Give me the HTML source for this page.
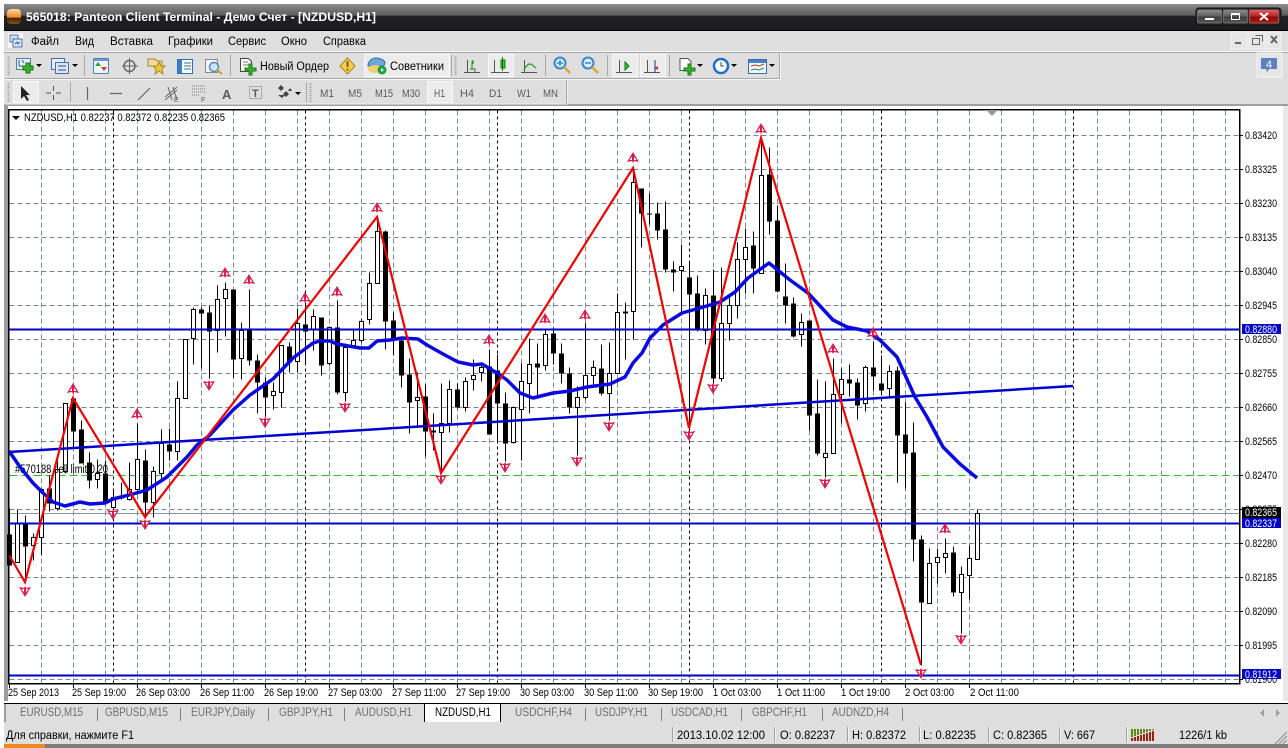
<!DOCTYPE html>
<html><head><meta charset="utf-8"><title>MT4</title>
<style>
html,body{margin:0;padding:0;background:#fff;width:1288px;height:748px;overflow:hidden}
svg{display:block;position:absolute;left:0;top:0}
text{font-family:"Liberation Sans",sans-serif;font-size:11.5px;fill:#000}
.g{fill:#5a5a5a}
.a text,text.a{font-size:11px}
.t text{fill:#707070;font-size:11.5px}
.w{fill:#fff;font-size:11px}
</style></head><body>
<svg width="1288" height="748" viewBox="0 0 1288 748" xmlns="http://www.w3.org/2000/svg">
<defs>
<linearGradient id="tb" x1="0" y1="0" x2="0" y2="1"><stop offset="0" stop-color="#8e8e8e"/><stop offset=".43" stop-color="#5a5a5a"/><stop offset=".44" stop-color="#232325"/><stop offset="1" stop-color="#1a1a1c"/></linearGradient>
<linearGradient id="btn" x1="0" y1="0" x2="0" y2="1"><stop offset="0" stop-color="#8a8a8a"/><stop offset=".5" stop-color="#5c5c5c"/><stop offset=".5" stop-color="#3c3c3c"/><stop offset="1" stop-color="#555"/></linearGradient>
<linearGradient id="cl" x1="0" y1="0" x2="0" y2="1"><stop offset="0" stop-color="#d86060"/><stop offset=".5" stop-color="#b82020"/><stop offset=".5" stop-color="#8e0c0c"/><stop offset="1" stop-color="#a81818"/></linearGradient>
<linearGradient id="or" x1="0" y1="0" x2="0" y2="1"><stop offset="0" stop-color="#ffd9a0"/><stop offset=".55" stop-color="#f08a20"/><stop offset=".6" stop-color="#3a2208"/><stop offset="1" stop-color="#8a5010"/></linearGradient>
</defs>
<rect width="1288" height="748" fill="#fff"/>
<!-- title bar -->
<rect x="4" y="4" width="1284" height="27" fill="url(#tb)"/>
<rect x="4" y="30" width="1284" height="1" fill="#000"/>
<rect x="7" y="9" width="14" height="15" rx="4" fill="url(#or)"/>
<text x="26" y="21" style="fill:#fff;font-weight:bold;font-size:12px" textLength="350" lengthAdjust="spacingAndGlyphs">565018: Panteon Client Terminal - Демо Счет - [NZDUSD,H1]</text>
<rect x="1196" y="8" width="85" height="17" rx="3" fill="#2a2a2c" stroke="#111"/>
<rect x="1197.5" y="10" width="24" height="13" rx="1.5" fill="url(#btn)" stroke="#999" stroke-opacity=".5"/>
<rect x="1223.5" y="10" width="24" height="13" rx="1.5" fill="url(#btn)" stroke="#999" stroke-opacity=".5"/>
<rect x="1249.5" y="10" width="29" height="13" rx="1.5" fill="url(#cl)" stroke="#d88" stroke-opacity=".5"/>
<rect x="1205" y="18" width="9" height="2" fill="#fff"/>
<rect x="1231.5" y="13.5" width="8" height="6" fill="none" stroke="#fff" stroke-width="1"/><rect x="1231" y="13" width="9" height="2" fill="#fff"/>
<path d="M1260 13l8 7M1268 13l-8 7" stroke="#fff" stroke-width="2" fill="none"/>
<!-- left frame + base -->
<rect x="4" y="31" width="1284" height="74" fill="#dfdfdf"/>
<rect x="4" y="51" width="1284" height="1" fill="#f8f8f8"/>
<rect x="4" y="52" width="1284" height="1" fill="#a8a8a8"/>
<rect x="4" y="104" width="1284" height="2" fill="#a0a09a"/>
<rect x="4" y="106" width="4" height="616" fill="#9c9c9c"/>
<rect x="1283" y="106" width="5" height="600" fill="#e8e8e8"/>
<!-- menu -->
<rect x="8" y="33" width="15" height="15" fill="#f4f6fb"/>
<rect x="10" y="35" width="8" height="7" fill="#cfe0f4" stroke="#5a7cb0"/><rect x="13" y="39" width="9" height="8" fill="#dce8f8" stroke="#4a6ca8"/><path d="M15 44l2-2 1 2 2-2" stroke="#3a5c98" fill="none"/>
<g>
<text x="31" y="45" textLength="28" lengthAdjust="spacingAndGlyphs">Файл</text>
<text x="75" y="45" textLength="19" lengthAdjust="spacingAndGlyphs">Вид</text>
<text x="110" y="45" textLength="43" lengthAdjust="spacingAndGlyphs">Вставка</text>
<text x="168" y="45" textLength="45" lengthAdjust="spacingAndGlyphs">Графики</text>
<text x="228" y="45" textLength="38" lengthAdjust="spacingAndGlyphs">Сервис</text>
<text x="281" y="45" textLength="26" lengthAdjust="spacingAndGlyphs">Окно</text>
<text x="323" y="45" textLength="43" lengthAdjust="spacingAndGlyphs">Справка</text>
</g>
<!-- mdi buttons -->
<path d="M1231 32h16v17h-16zM1249 32h16v17h-16zM1267 32h14v17h-14z" fill="#e6e6e6" stroke="#f4f4f4"/>
<rect x="1235" y="42" width="6" height="2" fill="#666"/>
<path d="M1255.5 35.5h7v6M1252.5 38.5h7v6h-7z" fill="none" stroke="#666"/>
<path d="M1271 36l6 7M1277 36l-6 7" stroke="#666" stroke-width="2" fill="none"/>
<!-- toolbar 1 -->
<path d="M5 78.5H779.5V53" fill="none" stroke="#a8a8a8"/><path d="M5 79.5H780.5V53" fill="none" stroke="#f8f8f8"/>
<path d="M8.5 56V76M455.5 56V76" stroke="#a0a0a0" stroke-dasharray="1 1" stroke-width="2"/>
<path d="M84.5 55V76M230.5 55V76M451.5 55V76M545.5 55V76M607.5 55V76M669.5 55V76" stroke="#a8a8a8"/>
<!-- new chart -->
<rect x="16.5" y="58.5" width="14" height="11" fill="#e4eefa" stroke="#5a7ca8"/><path d="M19 60v6M19 66h9M22 60l2 3" stroke="#405a80" fill="none"/>
<path d="M26 63h4v3h3v4h-3v3h-4v-3h-3v-4h3z" fill="#3ab030" stroke="#1c7a18"/>
<path d="M36 64h6l-3 3z" fill="#000"/>
<rect x="51.5" y="58.5" width="13" height="11" fill="#e4eefa" stroke="#4a6ca8"/><rect x="55.5" y="62.5" width="13" height="11" fill="#dce8f8" stroke="#4a6ca8"/><path d="M58 66h8M58 70h8" stroke="#446"/>
<path d="M72 64h6l-3 3z" fill="#000"/>
<rect x="93.5" y="58.5" width="15" height="15" rx="1" fill="#f0f5fc" stroke="#4a80c0"/><rect x="94" y="59" width="14" height="2" fill="#6a9ad8"/><path d="M98 62l3 4h-6z" fill="#30a030"/><path d="M104 71l3-4h-6z" fill="#d04020"/>
<circle cx="129.5" cy="66" r="5.5" fill="none" stroke="#666" stroke-width="1.5"/><path d="M129.5 58v16M122 66h16" stroke="#666"/>
<path d="M148 59h7l2 2h5v5h-14z" fill="#f0dc98" stroke="#a08840"/><path d="M159 62l2 4 4 0-3 3 1 5-4-3-4 3 1-5-3-3 4 0z" fill="#f0c838" stroke="#a88820"/>
<rect x="177.5" y="59.5" width="15" height="14" fill="#fff" stroke="#3070b8"/><rect x="178" y="60" width="4" height="13" fill="#3a80c8"/><path d="M184 63h7M184 66h7M184 69h7" stroke="#406890"/>
<rect x="205.5" y="59.5" width="12" height="13" fill="#eef2f8" stroke="#8a8a8a"/><circle cx="214" cy="67" r="4.5" fill="#cfe4f8" stroke="#5a88b8" stroke-width="1.5"/><path d="M217 70l5 4" stroke="#d0a030" stroke-width="2"/>
<!-- order -->
<path d="M240.5 58.5h8l3 3v10h-11z" fill="#fff" stroke="#444"/><path d="M243 62h5M243 65h6" stroke="#777"/>
<path d="M249 64h3v4h4v3h-4v4h-3v-4h-4v-3h4z" fill="#3ab030" stroke="#1c7a18"/>
<text x="260" y="70" textLength="69" lengthAdjust="spacingAndGlyphs">Новый Ордер</text>
<path d="M347.5 58l7.5 8-7.5 8-7.5-8z" fill="#f4cf50" stroke="#a88818"/><rect x="346.5" y="61" width="2" height="6" fill="#806000"/><rect x="346.5" y="68.5" width="2" height="2" fill="#806000"/>
<rect x="364.5" y="54.5" width="85" height="22" fill="#ececec" stroke="#f8f8f8"/>
<path d="M368 66c0-5 4-8 8-8s9 2 9 5-3 3-8 3-5 0-9 0z" fill="#6ea8d8" stroke="#3a70a8"/><ellipse cx="375" cy="69" rx="7" ry="4" fill="#f0d070"/><circle cx="382" cy="70" r="4.5" fill="#20a040"/><path d="M381 68v4l3-2z" fill="#fff"/>
<text x="390" y="70" textLength="54" lengthAdjust="spacingAndGlyphs">Советники</text>
<!-- charts -->
<rect x="488.5" y="54.5" width="25" height="22" fill="#ececec" stroke="#f8f8f8"/>
<rect x="612.5" y="54.5" width="25" height="22" fill="#ececec" stroke="#f8f8f8"/>
<rect x="640.5" y="54.5" width="25" height="22" fill="#ececec" stroke="#f8f8f8"/>
<path d="M467.5 60v13M464 72.5h16M494.5 60v13M491 72.5h18M524.5 60v13M521 72.5h16M619.5 60v13M616 72.5h16M647.5 60v13M644 72.5h16" stroke="#555" fill="none"/>
<path d="M473 60v4M472 61v8h3v3M472 69h-2" stroke="#1c8a1c" fill="none"/>
<rect x="501" y="60" width="4" height="8" fill="#40c040" stroke="#0a7a0a"/><path d="M502.5 57v14" stroke="#0a7a0a"/>
<path d="M524 70c2-4 4-6 6-6s3 2 6 4" stroke="#2a9a2a" fill="none" stroke-width="1.3"/>
<path d="M625 62l4 4-4 4z" fill="#40c040" stroke="#0a7a0a"/>
<path d="M658 66l-4 2 4 2z" fill="#d04020"/><path d="M655 60v13" stroke="#0a3a8a"/>
<!-- zoom -->
<circle cx="560" cy="63" r="5.5" fill="#d8ecfb" stroke="#3a86c8" stroke-width="2"/><path d="M557 63h6M560 60v6" stroke="#3a86c8" stroke-width="1.5"/><path d="M564 67l6 6" stroke="#d4a838" stroke-width="2.5"/>
<circle cx="588" cy="63" r="5.5" fill="#d8ecfb" stroke="#3a86c8" stroke-width="2"/><path d="M585 63h6" stroke="#3a86c8" stroke-width="1.5"/><path d="M592 67l6 6" stroke="#d4a838" stroke-width="2.5"/>
<!-- templates/clock -->
<path d="M680 58.5h8l3 3v9h-11z" fill="#fff" stroke="#555"/><path d="M688 64h3v4h4v3h-4v4h-3v-4h-4v-3h4z" fill="#3ab030" stroke="#1c7a18"/>
<path d="M697 64h6l-3 3z" fill="#000"/>
<circle cx="721" cy="66" r="7" fill="#fff" stroke="#1c70c8" stroke-width="2.5"/><path d="M721 62v4h3" stroke="#444" fill="none"/>
<path d="M731 64h6l-3 3z" fill="#000"/>
<rect x="748.5" y="59.5" width="18" height="14" fill="#f4f6fa" stroke="#3a6cb0"/><rect x="749" y="60" width="17" height="3" fill="#4a80c8"/><path d="M751 66l4-1 4 1 5-2" stroke="#b04020" fill="none"/><path d="M751 70l4-1 4 1 5-2" stroke="#309030" fill="none"/>
<path d="M769 64h6l-3 3z" fill="#000"/>
<!-- notification -->
<rect x="1257" y="53" width="25" height="24" fill="#e6e6e6" stroke="#f6f6f6"/>
<path d="M1261 58h16v11h-8l-2 3-1-3h-5z" fill="#5e80bc"/>
<text x="1266" y="68" style="fill:#fff;font-size:11px">4</text>
<!-- toolbar 2 -->
<path d="M5 104H567.5V80" fill="none" stroke="#f0f0f0"/><path d="M566.5 80V104" stroke="#a8a8a8"/>
<path d="M8.5 83V102M310.5 83V102" stroke="#a0a0a0" stroke-dasharray="1 1" stroke-width="2"/>
<path d="M70.5 82V102M306.5 82V102" stroke="#a8a8a8"/>
<rect x="13.5" y="81.5" width="25" height="21" fill="#ececec" stroke="#f8f8f8"/>
<rect x="427.5" y="81.5" width="25" height="21" fill="#ececec" stroke="#f8f8f8"/>
<path d="M21 86v13l3-3 3 5 2-1-3-5h4z" fill="#222"/>
<path d="M53.5 86v5M53.5 95v5M46 93h5M56 93h5" stroke="#555" fill="none"/>
<path d="M87.5 87v13M110 93.5h12M138 100l12-12" stroke="#666" fill="none" stroke-width="1.2"/>
<path d="M165 97l12-10M165 100l12-10M168 87l4 13M173 87l4 13" stroke="#666" fill="none"/>
<text x="174" y="102" class="g" style="font-size:7px">E</text>
<path d="M192 86h14M192 89h14M192 92h14M192 95h8" stroke="#777" stroke-dasharray="1 1"/>
<text x="201" y="102" class="g" style="font-size:7px">F</text>
<text x="222" y="99" class="g" style="font-weight:bold;font-size:13px">A</text>
<rect x="249.5" y="86.5" width="12" height="12" fill="none" stroke="#777" stroke-dasharray="1 1"/>
<text x="252" y="97" class="g" style="font-weight:bold;font-size:11px">T</text>
<path d="M281 85l3 3-3 3-3-3zM286 91l3 3-3 3-3-3z" fill="#444"/><path d="M278 95h7l-3 3zM290 88l2 3h-4z" fill="#444"/>
<path d="M295 92h6l-3 3z" fill="#000"/>
<g>
<text x="320" y="97" class="g" style="font-size:11px" textLength="14" lengthAdjust="spacingAndGlyphs">M1</text>
<text x="348" y="97" class="g" style="font-size:11px" textLength="14" lengthAdjust="spacingAndGlyphs">M5</text>
<text x="375" y="97" class="g" style="font-size:11px" textLength="18" lengthAdjust="spacingAndGlyphs">M15</text>
<text x="402" y="97" class="g" style="font-size:11px" textLength="18" lengthAdjust="spacingAndGlyphs">M30</text>
<text x="434" y="97" class="g" style="font-size:11px" textLength="11" lengthAdjust="spacingAndGlyphs">H1</text>
<text x="460" y="97" class="g" style="font-size:11px" textLength="14" lengthAdjust="spacingAndGlyphs">H4</text>
<text x="489" y="97" class="g" style="font-size:11px" textLength="13" lengthAdjust="spacingAndGlyphs">D1</text>
<text x="517" y="97" class="g" style="font-size:11px" textLength="14" lengthAdjust="spacingAndGlyphs">W1</text>
<text x="543" y="97" class="g" style="font-size:11px" textLength="15" lengthAdjust="spacingAndGlyphs">MN</text>
</g>

<!-- chart -->
<rect x="8" y="106" width="1275" height="595" fill="#fff"/>
<g shape-rendering="crispEdges" fill="none" transform="translate(.5 .5)">
<path stroke="#778899" stroke-dasharray="5 3" d="M9 135H1239M9 169H1239M9 203H1239M9 237H1239M9 271H1239M9 305H1239M9 339H1239M9 373H1239M9 407H1239M9 441H1239M9 509H1239M9 543H1239M9 577H1239M9 611H1239M9 645H1239M9 679H1239"/>
<path stroke="#778899" stroke-dasharray="5 3" d="M41 110V683M73 110V683M105 110V683M137 110V683M169 110V683M201 110V683M233 110V683M265 110V683M297 110V683M329 110V683M361 110V683M393 110V683M425 110V683M457 110V683M489 110V683M521 110V683M553 110V683M585 110V683M617 110V683M649 110V683M681 110V683M713 110V683M745 110V683M777 110V683M809 110V683M841 110V683M873 110V683M905 110V683M937 110V683M969 110V683M1001 110V683M1033 110V683M1065 110V683M1097 110V683M1129 110V683M1161 110V683M1193 110V683M1225 110V683"/>
<path stroke="#000" stroke-dasharray="3 3" d="M113 110V683M305 110V683M497 110V683M689 110V683M881 110V683M1073 110V683"/>
<path stroke="#32b432" stroke-dasharray="8 4" d="M9 475H1239"/>
<path stroke="#8a949c" d="M9 513H1239"/>
<!-- wicks -->
<path stroke="#000" d="M9 508V565M17 509V562M25 515V582M33 533V560M41 488V555M49 475V511M57 457V510M65 403V473M73 398V447M81 420V463M89 452V488M97 459V488M105 460V503M113 488V508M121 482V499M129 462V500M137 423V490M145 449V518M153 466V517M161 429V478M169 428V460M177 381V460M185 339V398M193 307V364M201 307V368M209 305V378M217 285V352M225 282V336M233 289V377M241 322V379M249 289V365M257 354V413M265 377V416M273 382V409M281 345V407M289 342V372M297 308V372M305 303V363M313 309V350M321 317V375M329 326V365M337 300V394M345 343V401M353 330V348M361 318V342M369 272V324M377 218V283M385 230V349M393 312V355M401 336V387M409 358V433M417 372V426M425 384V456M433 413V450M441 383V472M449 380V432M457 383V408M465 377V411M473 359V390M481 363V381M489 349V434M497 354V443M505 392V461M513 406V443M521 363V460M529 338V413M537 343V395M545 330V370M553 327V364M561 343V383M569 367V413M577 386V455M585 323V399M593 360V385M601 344V395M609 342V420M617 293V373M625 302V359M633 168V339M641 188V247M649 193V224M657 202V239M665 201V272M673 261V291M681 244V313M689 263V428M697 275V331M705 288V344M713 269V383M721 267V381M729 297V340M737 242V318M745 228V293M753 231V293M761 140V273M769 147V234M777 205V292M785 263V323M793 297V337M801 313V346M809 320V430M817 379V455M825 381V477M833 358V453M841 368V423M849 364V396M857 378V419M865 365V411M873 341V390M881 355V394M889 365V396M897 366V482M905 402V488M913 422V561M921 535V665M929 548V603M937 548V583M945 538V573M953 546V596M961 566V633M969 545V599M977 509V559"/>
<!-- white bodies -->
<path stroke="#000" fill="#fff" d="M15 523H19V562H15ZM31 537H35V545H31ZM39 489H43V537H39ZM55 469H59V508H55ZM63 403H67V471H63ZM95 473H99V479H95ZM111 497H115V507H111ZM127 489H131V499H127ZM135 459H139V489H135ZM151 471H155V502H151ZM159 443H163V473H159ZM175 398H179V451H175ZM183 339H187V398H183ZM191 309H195V338H191ZM215 299H219V330H215ZM223 289H227V298H223ZM239 330H243V358H239ZM271 391H275V395H271ZM279 345H283V392H279ZM295 323H299V361H295ZM311 316H315V329H311ZM327 327H331V363H327ZM343 347H347V392H343ZM351 340H355V345H351ZM359 321H363V340H359ZM367 283H371V319H367ZM375 231H379V283H375ZM415 397H419V400H415ZM439 423H443V432H439ZM447 389H451V423H447ZM463 381H467V407H463ZM471 375H475V379H471ZM479 367H483V372H479ZM511 407H515V442H511ZM519 381H523V409H519ZM527 364H531V383H527ZM543 334H547V365H543ZM575 397H579V407H575ZM583 375H587V397H583ZM591 367H595V375H591ZM607 373H611V393H607ZM615 312H619V373H615ZM631 182H635V311H631ZM679 266H683V270H679ZM703 295H707V330H703ZM719 323H723V378H719ZM727 305H731V323H727ZM735 259H739V305H735ZM743 247H747V259H743ZM759 175H763V273H759ZM799 322H803V334H799ZM823 453H827V457H823ZM831 394H835V453H831ZM839 379H843V394H839ZM863 367H867V403H863ZM887 371H891V388H887ZM927 563H931V603H927ZM935 557H939V562H935ZM943 553H947V557H943ZM959 574H963V592H959ZM967 558H971V575H967ZM975 513H979V559H975Z"/>
<!-- black bodies -->
<path stroke="#000" stroke-width="5" d="M9 534V565M25 523V546M49 488V503M73 398V431M81 429V463M89 462V480M105 473V503M121 496V498M145 460V502M169 444V451M201 309V313M209 312V331M233 289V359M249 330V360M257 360V382M265 382V397M289 346V362M305 324V331M321 317V365M337 327V392M385 231V321M393 320V340M401 340V375M409 374V402M425 396V431M433 430V432M457 389V407M489 366V434M497 370V403M505 403V443M537 363V367M553 333V353M561 353V373M569 373V407M601 368V393M625 311V313M641 188V213M649 213V214M657 213V230M665 229V269M673 269V272M689 277V294M697 293V329M713 295V378M753 245V268M769 174V221M777 220V291M785 296V305M793 303V336M809 320V415M817 413V453M849 379V383M857 382V405M873 367V376M881 383V390M897 370V435M905 434V453M913 452V539M921 539V602M953 552V592"/>
</g>
<!-- order text -->
<text x="15" y="473" style="font-size:11.5px" textLength="93" lengthAdjust="spacingAndGlyphs">#570188 sell limit 0.20</text>
<!-- trend + levels -->
<path d="M9 452L1073 386" stroke="#0000d0" stroke-width="2.5" fill="none"/>
<path d="M9 329.5H1239M9 523.5H1239M9 675.5H1239" stroke="#0000c8" stroke-width="2" fill="none" shape-rendering="crispEdges"/>
<!-- MA -->
<polyline fill="none" stroke="#0a0ae0" stroke-width="3.5" stroke-linejoin="round" points="9,451 20,467 33,483 42,492 53,502 65,506 80,502 90,504 105,503 113,499 133,494 147,490 167,477 187,457 197,445 210,435 233,410 250,395 273,379 293,358 313,343 320,341 330,341 337,344 360,348 369,348 377,341 390,340 402,338 418,339 427,345 443,354 458,362 473,365 482,364 497,373 507,380 520,393 533,398 553,393 570,391 587,387 610,384 625,377 633,363 642,353 650,338 663,325 682,313 700,308 720,302 735,292 748,278 769,263 790,280 808,293 833,320 847,327 867,331 880,340 897,357 915,397 927,417 943,447 960,464 977,478"/>
<!-- zigzag -->
<polyline fill="none" stroke="#f00000" stroke-width="2.2" points="9,555 25,582 73,398 145,517 377,217 441,473 633,168 689,428 761,138 921,665"/>
<!-- arrows -->
<path fill="#dc1c4c" d="M73 383l-6 10 5-1 1 2 1-2 5 1zM137 408l-6 10 5-1 1 2 1-2 5 1zM225 267l-6 10 5-1 1 2 1-2 5 1zM249 274l-6 10 5-1 1 2 1-2 5 1zM305 292l-6 10 5-1 1 2 1-2 5 1zM377 202l-6 10 5-1 1 2 1-2 5 1zM337 286l-6 10 5-1 1 2 1-2 5 1zM489 334l-6 10 5-1 1 2 1-2 5 1zM545 313l-6 10 5-1 1 2 1-2 5 1zM585 309l-6 10 5-1 1 2 1-2 5 1zM633 152l-6 10 5-1 1 2 1-2 5 1zM761 123l-6 10 5-1 1 2 1-2 5 1zM833 343l-6 10 5-1 1 2 1-2 5 1zM873 327l-6 10 5-1 1 2 1-2 5 1zM945 523l-6 10 5-1 1 2 1-2 5 1zM25 597l-6-10 5 1 1-2 1 2 5-1zM113 520l-6-10 5 1 1-2 1 2 5-1zM209 391l-6-10 5 1 1-2 1 2 5-1zM265 428l-6-10 5 1 1-2 1 2 5-1zM145 530l-6-10 5 1 1-2 1 2 5-1zM345 413l-6-10 5 1 1-2 1 2 5-1zM441 485l-6-10 5 1 1-2 1 2 5-1zM505 473l-6-10 5 1 1-2 1 2 5-1zM577 467l-6-10 5 1 1-2 1 2 5-1zM609 432l-6-10 5 1 1-2 1 2 5-1zM713 394l-6-10 5 1 1-2 1 2 5-1zM689 441l-6-10 5 1 1-2 1 2 5-1zM825 489l-6-10 5 1 1-2 1 2 5-1zM961 645l-6-10 5 1 1-2 1 2 5-1zM921 679l-6-10 5 1 1-2 1 2 5-1z"/>
<path fill="#fff" d="M73 383m-1 4.500l-2.500 3.500h2.500zm2 0l2.500 3.500h-2.500zM137 408m-1 4.500l-2.500 3.500h2.500zm2 0l2.500 3.500h-2.500zM225 267m-1 4.500l-2.500 3.500h2.500zm2 0l2.500 3.500h-2.500zM249 274m-1 4.500l-2.500 3.500h2.500zm2 0l2.500 3.500h-2.500zM305 292m-1 4.500l-2.500 3.500h2.500zm2 0l2.500 3.500h-2.500zM377 202m-1 4.500l-2.500 3.500h2.500zm2 0l2.500 3.500h-2.500zM337 286m-1 4.500l-2.500 3.500h2.500zm2 0l2.500 3.500h-2.500zM489 334m-1 4.500l-2.500 3.500h2.500zm2 0l2.500 3.500h-2.500zM545 313m-1 4.500l-2.500 3.500h2.500zm2 0l2.500 3.500h-2.500zM585 309m-1 4.500l-2.500 3.500h2.500zm2 0l2.500 3.500h-2.500zM633 152m-1 4.500l-2.500 3.500h2.500zm2 0l2.500 3.500h-2.500zM761 123m-1 4.500l-2.500 3.500h2.500zm2 0l2.500 3.500h-2.500zM833 343m-1 4.500l-2.500 3.500h2.500zm2 0l2.500 3.500h-2.500zM873 327m-1 4.500l-2.500 3.500h2.500zm2 0l2.500 3.500h-2.500zM945 523m-1 4.500l-2.500 3.500h2.500zm2 0l2.500 3.500h-2.500zM25 597m-1-4.500l-2.500-3.500h2.500zm2 0l2.500-3.500h-2.500zM113 520m-1-4.500l-2.500-3.500h2.500zm2 0l2.500-3.500h-2.500zM209 391m-1-4.500l-2.500-3.500h2.500zm2 0l2.500-3.500h-2.500zM265 428m-1-4.500l-2.500-3.500h2.500zm2 0l2.500-3.500h-2.500zM145 530m-1-4.500l-2.500-3.500h2.500zm2 0l2.500-3.500h-2.500zM345 413m-1-4.500l-2.500-3.500h2.500zm2 0l2.500-3.500h-2.500zM441 485m-1-4.500l-2.500-3.500h2.500zm2 0l2.500-3.500h-2.500zM505 473m-1-4.500l-2.500-3.500h2.500zm2 0l2.500-3.500h-2.500zM577 467m-1-4.500l-2.500-3.500h2.500zm2 0l2.500-3.500h-2.500zM609 432m-1-4.500l-2.500-3.500h2.500zm2 0l2.500-3.500h-2.500zM713 394m-1-4.500l-2.500-3.500h2.500zm2 0l2.500-3.500h-2.500zM689 441m-1-4.500l-2.500-3.500h2.500zm2 0l2.500-3.500h-2.500zM825 489m-1-4.500l-2.500-3.500h2.500zm2 0l2.500-3.500h-2.500zM961 645m-1-4.500l-2.500-3.500h2.500zm2 0l2.500-3.500h-2.500zM921 679m-1-4.500l-2.500-3.500h2.500zm2 0l2.500-3.500h-2.500z"/>
<!-- frame -->
<rect x="1240" y="110" width="43" height="591" fill="#fff"/>
<path d="M8.5 109.5H1239.5V683.5H8.5Z" fill="none" stroke="#000" stroke-width="1.5" shape-rendering="crispEdges"/>
<path d="M986 110h12l-6 6z" fill="#9a9a9a"/>
<path d="M12 116h8l-4 4z" fill="#000"/>
<text x="24" y="121" style="font-size:11px" textLength="201" lengthAdjust="spacingAndGlyphs">NZDUSD,H1  0.82237 0.82372 0.82235 0.82365</text>
<!-- right axis -->
<path stroke="#000" d="M1239 135.5h4M1239 169.5h4M1239 203.5h4M1239 237.5h4M1239 271.5h4M1239 305.5h4M1239 339.5h4M1239 373.5h4M1239 407.5h4M1239 441.5h4M1239 475.5h4M1239 509.5h4M1239 543.5h4M1239 577.5h4M1239 611.5h4M1239 645.5h4M1239 679.5h4"/>
<g class="a">
<text x="1245" y="139" textLength="32" lengthAdjust="spacingAndGlyphs">0.83420</text>
<text x="1245" y="173" textLength="32" lengthAdjust="spacingAndGlyphs">0.83325</text>
<text x="1245" y="207" textLength="32" lengthAdjust="spacingAndGlyphs">0.83230</text>
<text x="1245" y="241" textLength="32" lengthAdjust="spacingAndGlyphs">0.83135</text>
<text x="1245" y="275" textLength="32" lengthAdjust="spacingAndGlyphs">0.83040</text>
<text x="1245" y="309" textLength="32" lengthAdjust="spacingAndGlyphs">0.82945</text>
<text x="1245" y="343" textLength="32" lengthAdjust="spacingAndGlyphs">0.82850</text>
<text x="1245" y="377" textLength="32" lengthAdjust="spacingAndGlyphs">0.82755</text>
<text x="1245" y="411" textLength="32" lengthAdjust="spacingAndGlyphs">0.82660</text>
<text x="1245" y="445" textLength="32" lengthAdjust="spacingAndGlyphs">0.82565</text>
<text x="1245" y="479" textLength="32" lengthAdjust="spacingAndGlyphs">0.82470</text>
<text x="1245" y="513" textLength="32" lengthAdjust="spacingAndGlyphs">0.82375</text>
<text x="1245" y="547" textLength="32" lengthAdjust="spacingAndGlyphs">0.82280</text>
<text x="1245" y="581" textLength="32" lengthAdjust="spacingAndGlyphs">0.82185</text>
<text x="1245" y="615" textLength="32" lengthAdjust="spacingAndGlyphs">0.82090</text>
<text x="1245" y="649" textLength="32" lengthAdjust="spacingAndGlyphs">0.81995</text>
<text x="1245" y="683" textLength="32" lengthAdjust="spacingAndGlyphs">0.81900</text>
</g>
<rect x="1242" y="324" width="39" height="10" fill="#0000c8"/>
<rect x="1242" y="507" width="39" height="11" fill="#000"/>
<rect x="1242" y="518" width="39" height="10" fill="#0000c8"/>
<rect x="1242" y="669" width="39" height="10" fill="#0000c8"/>
<text x="1245" y="333" class="w" style="fill:#fff" textLength="32" lengthAdjust="spacingAndGlyphs">0.82880</text>
<text x="1245" y="516" class="w" style="fill:#fff" textLength="32" lengthAdjust="spacingAndGlyphs">0.82365</text>
<text x="1245" y="527" class="w" style="fill:#fff" textLength="32" lengthAdjust="spacingAndGlyphs">0.82337</text>
<text x="1245" y="678" class="w" style="fill:#fff" textLength="32" lengthAdjust="spacingAndGlyphs">0.81912</text>
<!-- date axis -->
<path stroke="#000" d="M9.5 684v4M73.5 684v4M137.5 684v4M201.5 684v4M265.5 684v4M329.5 684v4M393.5 684v4M457.5 684v4M521.5 684v4M585.5 684v4M649.5 684v4M713.5 684v4M777.5 684v4M841.5 684v4M905.5 684v4M969.5 684v4"/>
<g class="a">
<text x="8" y="696" textLength="51" lengthAdjust="spacingAndGlyphs">25 Sep 2013</text>
<text x="72" y="696" textLength="54" lengthAdjust="spacingAndGlyphs">25 Sep 19:00</text>
<text x="136" y="696" textLength="54" lengthAdjust="spacingAndGlyphs">26 Sep 03:00</text>
<text x="200" y="696" textLength="54" lengthAdjust="spacingAndGlyphs">26 Sep 11:00</text>
<text x="264" y="696" textLength="54" lengthAdjust="spacingAndGlyphs">26 Sep 19:00</text>
<text x="328" y="696" textLength="54" lengthAdjust="spacingAndGlyphs">27 Sep 03:00</text>
<text x="392" y="696" textLength="54" lengthAdjust="spacingAndGlyphs">27 Sep 11:00</text>
<text x="456" y="696" textLength="54" lengthAdjust="spacingAndGlyphs">27 Sep 19:00</text>
<text x="520" y="696" textLength="54" lengthAdjust="spacingAndGlyphs">30 Sep 03:00</text>
<text x="584" y="696" textLength="54" lengthAdjust="spacingAndGlyphs">30 Sep 11:00</text>
<text x="648" y="696" textLength="55" lengthAdjust="spacingAndGlyphs">30 Sep 19:00</text>
<text x="713" y="696" textLength="48" lengthAdjust="spacingAndGlyphs">1 Oct 03:00</text>
<text x="777" y="696" textLength="48" lengthAdjust="spacingAndGlyphs">1 Oct 11:00</text>
<text x="841" y="696" textLength="49" lengthAdjust="spacingAndGlyphs">1 Oct 19:00</text>
<text x="905" y="696" textLength="49" lengthAdjust="spacingAndGlyphs">2 Oct 03:00</text>
<text x="970" y="696" textLength="49" lengthAdjust="spacingAndGlyphs">2 Oct 11:00</text>
</g>
<!-- tabs -->
<rect x="0" y="701" width="1288" height="2" fill="#fff"/>
<rect x="4" y="703" width="1284" height="19" fill="#dfdfdf"/>
<rect x="4" y="703" width="1284" height="1" fill="#000"/>
<rect x="4" y="704" width="2" height="18" fill="#9c9c9c"/>
<path d="M424.5 722V703.5H500.5V722" fill="#fff" stroke="#000"/>
<rect x="425" y="720" width="75" height="2" fill="#fff"/>
<path stroke="#808080" d="M97.5 708v13M180.5 708v13M268.5 708v13M344.5 708v13M585.5 708v13M661.5 708v13M741.5 708v13M822.5 708v13M902.5 708v13"/>
<g class="t">
<text x="20" y="716" textLength="63" lengthAdjust="spacingAndGlyphs">EURUSD,M15</text>
<text x="105" y="716" textLength="63" lengthAdjust="spacingAndGlyphs">GBPUSD,M15</text>
<text x="191" y="716" textLength="64" lengthAdjust="spacingAndGlyphs">EURJPY,Daily</text>
<text x="279" y="716" textLength="54" lengthAdjust="spacingAndGlyphs">GBPJPY,H1</text>
<text x="355" y="716" textLength="57" lengthAdjust="spacingAndGlyphs">AUDUSD,H1</text>
<text x="435" y="716" style="fill:#000" textLength="56" lengthAdjust="spacingAndGlyphs">NZDUSD,H1</text>
<text x="515" y="716" textLength="57" lengthAdjust="spacingAndGlyphs">USDCHF,H4</text>
<text x="595" y="716" textLength="53" lengthAdjust="spacingAndGlyphs">USDJPY,H1</text>
<text x="671" y="716" textLength="57" lengthAdjust="spacingAndGlyphs">USDCAD,H1</text>
<text x="752" y="716" textLength="55" lengthAdjust="spacingAndGlyphs">GBPCHF,H1</text>
<text x="832" y="716" textLength="57" lengthAdjust="spacingAndGlyphs">AUDNZD,H4</text>
</g>
<path d="M1264 709l-4 4 4 4zM1276 709l4 4-4 4z" fill="#a0a0a0"/>
<!-- status -->
<rect x="4" y="722" width="1284" height="22" fill="#dfdfdf"/>
<rect x="0" y="744" width="1288" height="4" fill="#7c7c7c"/>
<rect x="4" y="744" width="41" height="4" fill="#f08a20"/>
<rect x="0" y="744" width="4" height="4" fill="#fff"/>
<path stroke="#a0a0a0" d="M672.5 727v15M774.5 727v15M847.5 727v15M919.5 727v15M988.5 727v15M1059.5 727v15M1126.5 727v15"/>
<path stroke="#f4f4f4" d="M673.5 727v15M775.5 727v15M848.5 727v15M920.5 727v15M989.5 727v15M1060.5 727v15M1127.5 727v15"/>
<text x="6" y="739" textLength="128" lengthAdjust="spacingAndGlyphs">Для справки, нажмите F1</text>
<text x="677" y="739" textLength="88" lengthAdjust="spacingAndGlyphs">2013.10.02 12:00</text>
<text x="780" y="739" textLength="55" lengthAdjust="spacingAndGlyphs">O: 0.82237</text>
<text x="852" y="739" textLength="54" lengthAdjust="spacingAndGlyphs">H: 0.82372</text>
<text x="923" y="739" textLength="53" lengthAdjust="spacingAndGlyphs">L: 0.82235</text>
<text x="993" y="739" textLength="54" lengthAdjust="spacingAndGlyphs">C: 0.82365</text>
<text x="1064" y="739" textLength="31" lengthAdjust="spacingAndGlyphs">V: 667</text>
<text x="1179" y="739" textLength="48" lengthAdjust="spacingAndGlyphs">1226/1 kb</text>
<g shape-rendering="crispEdges">
<path fill="#5a8a10" d="M1131 729h2v8h-2zM1134 729h2v7h-2zM1137 729h2v6h-2zM1140 729h2v5h-2zM1143 729h2v4h-2zM1146 729h2v3h-2zM1149 729h2v2h-2zM1152 729h2v1h-2z"/>
<path fill="#a02010" d="M1131 738h2v3h-2zM1134 737h2v4h-2zM1137 736h2v5h-2zM1140 735h2v6h-2zM1143 734h2v7h-2zM1146 733h2v8h-2zM1149 732h2v9h-2zM1152 731h2v10h-2z"/>
</g>
<path d="M1275 744l12-12M1279 744l8-8M1283 744l4-4" stroke="#a0a0a0" stroke-width="1.5"/>
</svg>
</body></html>
